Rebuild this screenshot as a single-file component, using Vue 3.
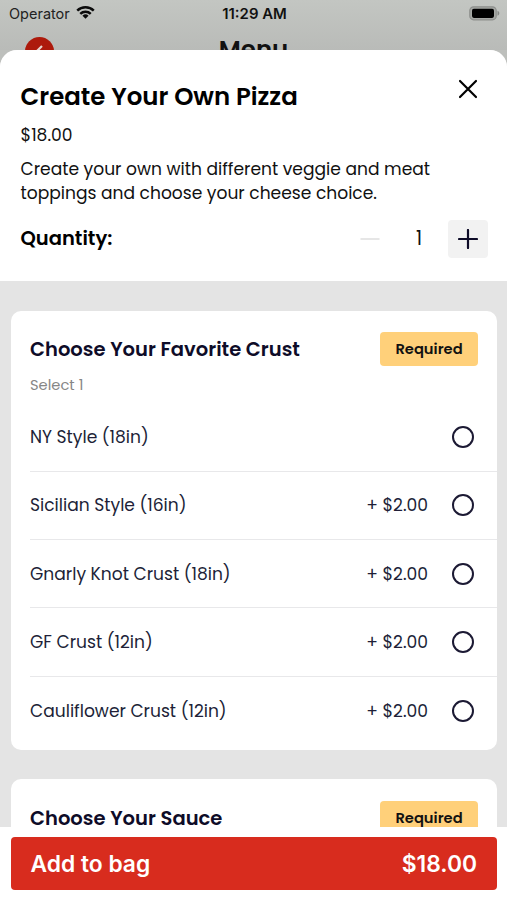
<script setup>
import { ref, computed } from 'vue'

const basePrice = 18
const quantity = ref(1)
const selected = ref(null)

const crusts = [
  { name: 'NY Style (18in)' },
  { name: 'Sicilian Style (16in)', price: '+ $2.00' },
  { name: 'Gnarly Knot Crust (18in)', price: '+ $2.00' },
  { name: 'GF Crust (12in)', price: '+ $2.00' },
  { name: 'Cauliflower Crust (12in)', price: '+ $2.00' }
]

const total = computed(() => '$' + (basePrice * quantity.value).toFixed(2))

function changeQuantity(n) {
  if (quantity.value + n < 1) return
  quantity.value += n
}
</script>

<template>
  <div class="screen">
    <div class="backdrop">
      <div class="statusBar">
        <div class="carrier">
          <span>Operator</span>
          <svg width="19" height="15" viewBox="0 0 20 15">
            <g fill="none" stroke="#0b0b0b" stroke-width="2.6">
              <path d="M1.3 5.6a12.4 12.4 0 0 1 17.4 0" />
              <path d="M4.5 8.9a7.9 7.9 0 0 1 11 0" />
            </g>
            <path d="M6.8 10.9a4.6 4.6 0 0 1 6.4 0L10 14.2z" fill="#0b0b0b" />
          </svg>
        </div>
        <b class="time">11:29 AM</b>
        <svg class="battery" width="31" height="15" viewBox="0 0 31 15">
          <rect x="0.8" y="0.8" width="26.4" height="13" rx="3.8" fill="#a6a8a5" stroke="#8d8f8c" stroke-width="1.2" />
          <rect x="3" y="2.7" width="22" height="9.2" rx="1.8" fill="#000" />
          <path d="M28.5 4.8c2.4.8 2.4 4.2 0 5z" fill="#858784" />
        </svg>
      </div>
      <div class="navBar">
        <span class="back">
          <svg width="29" height="29" viewBox="0 0 29 29">
            <path d="M17 9l-5.5 5.5 5.5 5.5" fill="none" stroke="#e5d5cf" stroke-width="2.2" />
          </svg>
        </span>
        <h1>Menu</h1>
      </div>
    </div>

    <main class="sheet">
      <header class="product">
        <div class="titleRow">
          <h2>Create Your Own Pizza</h2>
          <button class="close">
            <svg width="20" height="20" viewBox="0 0 20 20">
              <path d="M2 2l16 16M18 2L2 18" stroke="#000" stroke-width="2.2" stroke-linecap="round" />
            </svg>
          </button>
        </div>
        <p class="price">$18.00</p>
        <p class="description">
          Create your own with different veggie and meat<br />
          toppings and choose your cheese choice.
        </p>
        <div class="quantity">
          <h3>Quantity:</h3>
          <button class="minus" @click="changeQuantity(-1)">
            <svg width="20" height="20" viewBox="0 0 20 20">
              <path d="M0.5 10h19" stroke="#e6e6e6" stroke-width="2" />
            </svg>
          </button>
          <span class="count">{{ quantity }}</span>
          <button class="plus" @click="changeQuantity(1)">
            <svg width="20" height="20" viewBox="0 0 20 20">
              <path d="M1 10h18M10 1v18" stroke="#0e0c28" stroke-width="2.2" stroke-linecap="round" />
            </svg>
          </button>
        </div>
      </header>

      <section class="card">
        <div class="cardHead">
          <h3>Choose Your Favorite Crust</h3>
          <span class="badge">Required</span>
        </div>
        <p class="hint">Select 1</p>
        <ul>
          <li v-for="(item, idx) of crusts" :key="idx" @click="selected = idx">
            <span class="name">{{ item.name }}</span>
            <span>{{ item.price }}</span>
            <i class="radio" :class="{ checked: selected === idx }"></i>
          </li>
        </ul>
      </section>

      <section class="card">
        <div class="cardHead">
          <h3>Choose Your Sauce</h3>
          <span class="badge">Required</span>
        </div>
      </section>
    </main>

    <footer>
      <button class="add">
        <span>Add to bag</span>
        <span>{{ total }}</span>
      </button>
    </footer>
  </div>
</template>

<style>
body {
  margin: 0;
  overflow: hidden;
}
</style>

<style scoped>
.screen {
  width: 507px;
  height: 900px;
  overflow: hidden;

  display: flex;
  flex-direction: column;

  background-color: #bdbfbc;
  color: #111;
  font-family: Poppins, Inter, sans-serif;
}

h1,
h2,
h3,
p,
ul {
  margin: 0;
  padding: 0;
}

h1,
h2,
h3 {
  font-weight: 600;
}

button {
  border: none;
  padding: 0;
  background-color: transparent;
  font-family: inherit;
  cursor: pointer;

  display: flex;
  align-items: center;
  justify-content: center;
}

svg {
  display: block;
}

.backdrop {
  height: 50px;
  flex: none;
  overflow: hidden;
  background: linear-gradient(#c3c6c2, #b9bbb8);
}

.statusBar {
  height: 27px;
  padding: 0 7px 0 9px;

  display: grid;
  grid-template-columns: 1fr auto 1fr;
  align-items: center;

  font-family: Inter, sans-serif;
  font-size: 14.5px;
}

.carrier {
  display: flex;
  align-items: center;
  gap: 6px;
  color: #222;
}

.carrier svg {
  margin-top: -2px;
}

.time {
  font-weight: 600;
  font-size: 14.9px;
}

.battery {
  justify-self: end;
  margin-top: -1px;
}

.navBar {
  height: 45px;
  padding: 0 25px;

  display: grid;
  grid-template-columns: 1fr auto 1fr;
  align-items: start;
}

.back {
  width: 29px;
  height: 29px;
  margin-top: 10px;
  border-radius: 50%;
  background-color: #ad1a0c;
}

.navBar h1 {
  margin-top: 6px;
  font-size: 24.5px;
  line-height: 34px;
}

.sheet {
  flex: 1;
  min-height: 0;
  overflow: hidden;
  border-radius: 17px 17px 0 0;
  background-color: #e4e4e4;
}

.product {
  box-sizing: border-box;
  height: 231px;
  padding: 27px 19px 0 20.5px;
  background-color: #fff;
}

.titleRow {
  height: 38px;

  display: flex;
  justify-content: space-between;
}

.titleRow h2 {
  font-size: 24.45px;
  line-height: 39px;
  color: #000;
}

.close {
  width: 40px;
  height: 24px;
}

.price {
  margin-top: 8px;
  font-size: 17.1px;
  line-height: 25px;
}

.description {
  margin-top: 9px;
  font-size: 17.1px;
  line-height: 24px;
  white-space: nowrap;
}

.quantity {
  height: 39px;
  margin-top: 14px;

  display: flex;
  align-items: center;
}

.quantity h3 {
  flex: 1;
  font-size: 19.5px;
  color: #000;
}

.minus,
.plus {
  width: 40px;
  height: 38px;
  border-radius: 4px;
}

.plus {
  background-color: #f2f2f2;
}

.count {
  width: 58px;
  text-align: center;
  font-size: 19px;
}

.card {
  box-sizing: border-box;
  height: 439px;
  margin: 29.5px 10px 0 10.5px;
  padding: 21px 0 0 19.5px;
  overflow: hidden;
  border-radius: 10px;
  background-color: #fff;
  color: #0e0c28;
}

.cardHead {
  height: 35px;
  padding-right: 19px;

  display: flex;
  align-items: center;
  justify-content: space-between;
}

.cardHead h3 {
  font-size: 19.55px;
}

.badge {
  width: 98px;
  border-radius: 4px;
  background-color: #ffd07a;
  color: #111;
  font-size: 14.7px;
  font-weight: 600;
  line-height: 34px;
  text-align: center;
}

.hint {
  margin-top: 8px;
  font-size: 14.7px;
  line-height: 21px;
  color: #868686;
}

.card ul {
  margin-top: 8px;
  list-style: none;
}

.card li {
  box-sizing: border-box;
  height: 68.3px;
  padding-right: 23px;
  border-bottom: 1.5px solid #e8e8ea;

  display: flex;
  align-items: center;

  font-size: 17.1px;
  color: #211f38;
}

.card li:last-child {
  border-bottom: none;
}

.name {
  flex: 1;
}

.radio {
  box-sizing: border-box;
  width: 22px;
  height: 22px;
  margin-left: 24px;
  border: 2px solid #1c1a34;
  border-radius: 50%;
}

.radio.checked {
  border-width: 7px;
}

footer {
  box-sizing: border-box;
  flex: none;
  height: 73.5px;
  padding: 10px 10px 0 10.5px;
  background-color: #fff;
}

.add {
  box-sizing: border-box;
  width: 100%;
  height: 53.5px;
  padding: 0 20px;
  justify-content: space-between;
  border-radius: 4px;
  background-color: #d82c1e;
  color: #fff;
  font-family: Inter, sans-serif;
  font-size: 22.8px;
  font-weight: 600;
}
</style>
